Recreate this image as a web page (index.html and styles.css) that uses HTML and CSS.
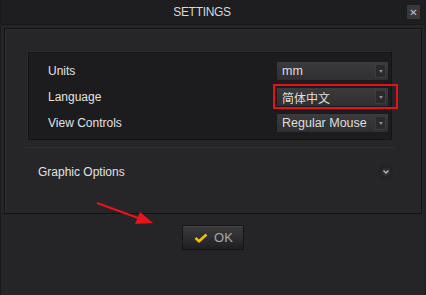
FILE: index.html
```html
<!DOCTYPE html>
<html>
<head>
<meta charset="utf-8">
<link rel="stylesheet" href="styles.css">
</head>
<body>
<div class="window">
  <div class="titlebar">
    <span></span>
    <span class="title">SETTINGS</span>
    <span class="close-wrap"><span class="close">✕</span></span>
  </div>
  <div class="panel">
    <div class="group">
      <div class="row">
        <span class="label">Units</span>
        <div class="select"><span>mm</span><span class="arrow"></span></div>
      </div>
      <div class="row">
        <span class="label">Language</span>
        <div class="select highlighted"><span class="cjk">简体中文</span><span class="arrow"></span></div>
      </div>
      <div class="row">
        <span class="label">View Controls</span>
        <div class="select"><span>Regular Mouse</span><span class="arrow"></span></div>
      </div>
    </div>
    <div class="sep"></div>
    <div class="graphic">
      <span class="label">Graphic Options</span>
      <span class="chev">
        <svg width="6" height="4" viewBox="0 0 6 4"><path d="M0.5 0.5 L3 3 L5.5 0.5" fill="none" stroke="#b8b8b8" stroke-width="1.3"/></svg>
      </span>
    </div>
  </div>
  <div class="footer">
    <button class="ok">
      <svg width="14" height="10" viewBox="0 0 14 10"><path d="M1.5 5 L5 8.2 L12.5 1.5" fill="none" stroke="#f2c200" stroke-width="2.6" stroke-linejoin="miter"/></svg>
      <span>OK</span>
    </button>
  </div>
  <svg class="annot-arrow" width="70" height="30" viewBox="0 0 70 30">
    <line x1="2" y1="3" x2="46" y2="19" stroke="#e8141a" stroke-width="2"/>
    <polygon points="58,23 40,24 45,12" fill="#e8141a"/>
  </svg>
</div>
</body>
</html>
```
FILE: styles.css
```css
* { box-sizing: border-box; }
html, body { margin: 0; padding: 0; }
body {
  width: 426px;
  height: 295px;
  background: #232325;
  font-family: "Liberation Sans", Arial, sans-serif;
  overflow: hidden;
}
.window {
  position: relative;
  width: 426px;
  height: 295px;
  background: #252527;
  border-left: 1px solid #1a1a1b;
  border-right: 1px solid #1a1a1b;
}
.titlebar {
  height: 25px;
  background: #1e1e20;
  display: grid;
  grid-template-columns: 1fr auto 1fr;
  align-items: center;
  border-bottom: 1px solid #19191a;
}
.title {
  color: #d8d8d8;
  font-size: 12px;
  letter-spacing: -0.3px;
  padding-right: 22px;
}
.close-wrap {
  display: flex;
  justify-content: flex-end;
  padding-right: 5px;
}
.close {
  width: 13px;
  height: 14px;
  background: #38383a;
  color: #c4c4c4;
  font-size: 10px;
  font-weight: bold;
  display: flex;
  align-items: center;
  justify-content: center;
  font-family: "DejaVu Sans", sans-serif;
}
.panel {
  margin: 3px 3px 0 3px;
  height: 186px;
  border: 1px solid #121213;
  background: #262628;
  padding: 23px 29px 0 23px;
  box-shadow: inset 1px 1px 0 #2e2e30;
}
.group {
  background: #1c1c1e;
  border: 1px solid #141415;
  box-shadow: -1px -1px 0 #2c2c2e;
  padding: 9px 3px 7px 19px;
  display: flex;
  flex-direction: column;
  gap: 8px;
}
.row {
  display: flex;
  align-items: center;
  justify-content: space-between;
  height: 18px;
}
.label {
  color: #e2e2e2;
  font-size: 12px;
}
.select {
  position: relative;
  width: 111px;
  height: 18px;
  background: linear-gradient(#3b3b3d, #2f2f31);
  display: flex;
  align-items: center;
  justify-content: space-between;
  padding: 0 2px 0 5px;
  color: #dedede;
  font-size: 12.5px;
}
.select .cjk {
  font-family: "Noto Sans CJK SC", sans-serif;
  font-size: 12px;
}
.arrow {
  width: 11px;
  height: 14px;
  background: #2a2a2c;
  border: 1px solid #3c3c3e;
  position: relative;
}
.arrow::after {
  content: "";
  position: absolute;
  left: 3px;
  top: 5px;
  border-left: 2px solid transparent;
  border-right: 2px solid transparent;
  border-top: 3px solid #8a8a8a;
}
.highlighted::after {
  content: "";
  position: absolute;
  left: -4px;
  right: -10px;
  top: -4px;
  bottom: -3px;
  border: 2px solid #e3121a;
}
.sep {
  height: 1px;
  background: #2f2f31;
  margin: 7px 0 0 -3px;
  width: 370px;
}
.graphic {
  display: flex;
  align-items: center;
  justify-content: space-between;
  margin-top: 17px;
  padding: 0 0 0 10px;
  width: 364px;
}
.chev {
  width: 12px;
  height: 12px;
  border-radius: 50%;
  background: radial-gradient(#303032 30%, #161618);
  box-shadow: 0 0 1px #111;
  display: flex;
  align-items: center;
  justify-content: center;
}
.footer {
  display: flex;
  justify-content: center;
  padding-top: 11px;
}
.ok {
  width: 62px;
  height: 25px;
  border: 1px solid #151516;
  background: linear-gradient(#3a3a3c 0%, #2e2e30 50%, #1e1e20 100%);
  display: flex;
  align-items: center;
  justify-content: center;
  gap: 6px;
  padding: 0 0 0 1px;
  color: #a8a8a8;
  font-family: "Liberation Sans", Arial, sans-serif;
  font-size: 13px;
  box-shadow: inset 0 1px 0 #464648;
}
.annot-arrow {
  position: absolute;
  left: 94px;
  top: 200px;
}
```
